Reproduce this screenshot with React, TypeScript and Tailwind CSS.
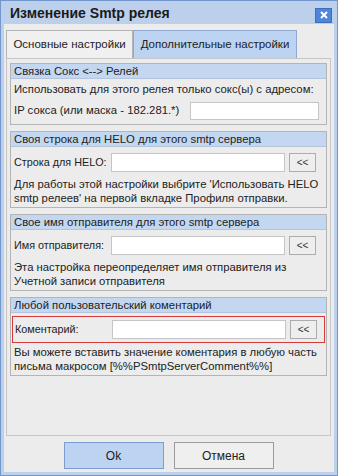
import React from "react";

const font = "font-['Tahoma','Liberation_Sans',sans-serif]";

const Group: React.FC<{ title: string; className?: string; children: React.ReactNode }> = ({ title, className, children }) => (
  <div className={`border border-[#b4b4b4] bg-[#ececec] ${className || ""}`}>
    <div className="h-[15px] bg-[#c4d7f1] border-b border-[#b4c4dc] pl-[3px] leading-[15px] text-[#222] whitespace-nowrap">
      {title}
    </div>
    <div className="px-[3px]">{children}</div>
  </div>
);

const ArrowBtn = () => (
  <button className="w-[27px] h-[19px] border border-[#acacac] bg-[#eeeeee] text-[10px] leading-none text-[#333] flex items-center justify-center">
    &lt;&lt;
  </button>
);

const FieldRow: React.FC<{ label: string }> = ({ label }) => (
  <div className="flex items-center h-[19px]">
    <span className="w-[97px] shrink-0 whitespace-nowrap text-[#222] text-[10.8px]">{label}</span>
    <div className="w-[174px] h-[19px] border border-[#c5c5c5] bg-white" />
    <div className="ml-[4px]">
      <ArrowBtn />
    </div>
  </div>
);

export default function App() {
  return (
    <div className={`w-[338px] h-[476px] bg-[#bcd0ec] border border-[#7396cc] flex flex-col ${font} text-[11.3px]`}>
      <div className="h-[23px] shrink-0 flex items-center justify-between pl-[9px] pr-[5px]">
        <span className="text-[14px] font-bold text-[#1a1a1a] leading-none">Изменение Smtp релея</span>
        <div className="w-[17px] h-[15px] mt-[5px] bg-[#4f84d8] border border-[#3b6fc2] flex items-center justify-center">
          <svg width="8" height="8" viewBox="0 0 8 8">
            <path d="M1 1 L7 7 M7 1 L1 7" stroke="#fff" strokeWidth="2" />
          </svg>
        </div>
      </div>
      <div className="flex-1 mx-[3px] mb-[3px] bg-[#ececec] flex flex-col pl-[2px] pr-[3px] pt-[6px]">
        <div className="flex h-[28px] shrink-0 text-[11.5px]">
          <div className="w-[127px] border border-[#b4b4b4] border-b-0 bg-[#f0f0f0] flex items-center justify-center text-[#222]">
            Основные настройки
          </div>
          <div className="w-[164px] border border-[#8fa9d0] border-b-0 bg-[#bcd4f1] flex items-center justify-center text-[#222]">
            Дополнительные настройки
          </div>
        </div>
        <div className="h-[378px] shrink-0 border border-[#c6c6c6] px-[3px] pt-[4px] flex flex-col gap-[6px]">
          <Group title="Связка Сокс <--> Релей" className="h-[62px]">
            <div className="leading-[14px] pt-[3px] text-[#222] whitespace-nowrap">
              Использовать для этого релея только сокс(ы) с адресом:
            </div>
            <div className="flex items-center h-[19px] mt-[5px]">
              <span className="w-[176px] shrink-0 whitespace-nowrap text-[#222]">IP сокса (или маска - 182.281.*)</span>
              <div className="w-[129px] h-[18px] border border-[#c5c5c5] bg-white" />
            </div>
          </Group>
          <Group title="Своя строка для HELO для этого smtp сервера" className="h-[77px]">
            <div className="pt-[6px]">
              <FieldRow label="Строка для HELO:" />
            </div>
            <div className="leading-[14px] pt-[5px] text-[#222]">
              Для работы этой настройки выбрите 'Использовать HELO smtp релеев' на первой вкладке Профиля отправки.
            </div>
          </Group>
          <Group title="Свое имя отправителя для этого smtp сервера" className="h-[77px]">
            <div className="pt-[6px]">
              <FieldRow label="Имя отправителя:" />
            </div>
            <div className="leading-[14px] pt-[5px] text-[#222]">
              Эта настройка переопределяет имя отправителя из Учетной записи отправителя
            </div>
          </Group>
          <Group title="Любой пользовательский коментарий" className="h-[79px]">
            <div className="mt-[3px] -mx-[2px] border border-[#d33a3a] h-[27px] flex items-center px-[2px]">
              <FieldRow label="Коментарий:" />
            </div>
            <div className="leading-[14px] pt-[2px] text-[#222]">
              Вы можете вставить значение коментария в любую часть письма макросом [%%PSmtpServerComment%%]
            </div>
          </Group>
        </div>
        <div className="flex justify-center gap-[10px] mt-[6px]">
          <button className="w-[100px] h-[27px] bg-[#bcd4f1] border border-[#7c9dd0] text-[12px] text-[#222]">Ok</button>
          <button className="w-[100px] h-[27px] bg-[#efefef] border border-[#9a9a9a] text-[12px] text-[#222]">Отмена</button>
        </div>
      </div>
    </div>
  );
}
